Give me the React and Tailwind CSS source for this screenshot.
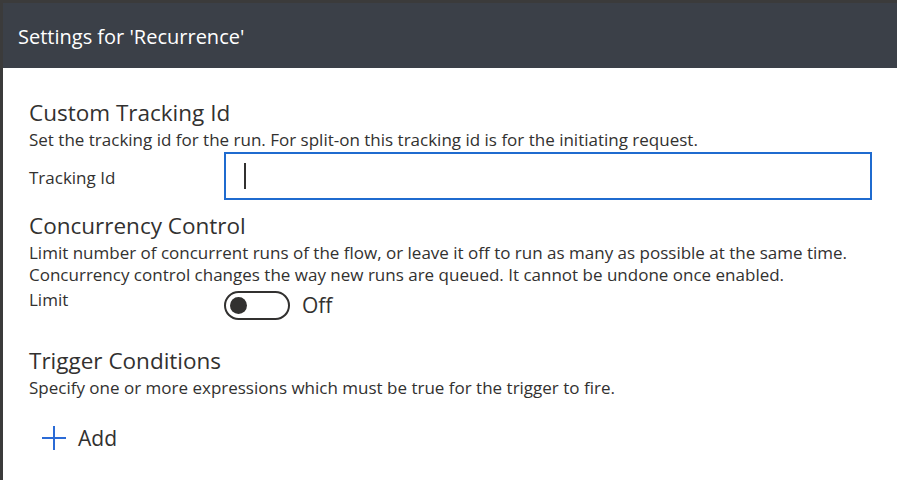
export default function App() {
  const font = { fontFamily: '"Open Sans", "Noto Sans", sans-serif' };
  return (
    <div className="w-[897px] h-[480px] bg-[#3b3b3b] pl-[3px] pt-[3px] overflow-hidden" style={font}>
      <div className="bg-[#3b4048] h-[65px] flex items-center pl-[15px]">
        <span className="text-white text-[20px] leading-[28px] mt-[2px]">Settings for 'Recurrence'</span>
      </div>
      <div className="bg-white h-[412px] pl-[26px] pr-[25px] pt-[30px] text-[#323130]">
        <div className="text-[22.5px] leading-[30px]">Custom Tracking Id</div>
        <div className="text-[17px] leading-[22px] mt-[1px]">Set the tracking id for the run. For split-on this tracking id is for the initiating request.</div>
        <div className="flex items-center mt-[1px]">
          <div className="w-[195px] text-[17px] mt-[4px]">Tracking Id</div>
          <div className="flex-1 h-[48px] border-2 border-[#1f6bcf] flex items-center pl-[18px]">
            <div className="w-[2px] h-[26px] bg-[#323130]"></div>
          </div>
        </div>
        <div className="text-[22.5px] leading-[30px] mt-[11px]">Concurrency Control</div>
        <div className="text-[17px] leading-[22px] mt-[1px]">Limit number of concurrent runs of the flow, or leave it off to run as many as possible at the same time.</div>
        <div className="text-[17px] leading-[22px]">Concurrency control changes the way new runs are queued. It cannot be undone once enabled.</div>
        <div className="flex items-start mt-[2px]">
          <div className="w-[195px] text-[17px] leading-[22px] mt-[1px]">Limit</div>
          <div className="flex items-center mt-[2px]">
            <div className="w-[66px] h-[29px] rounded-full border-2 border-[#323130] flex items-center pl-[4px]">
              <div className="w-[17px] h-[17px] rounded-full bg-[#323130]"></div>
            </div>
            <span className="ml-[12px] text-[21px] leading-[29px] mt-[1px]">Off</span>
          </div>
        </div>
        <div className="text-[22.5px] leading-[30px] mt-[26px]">Trigger Conditions</div>
        <div className="text-[17px] leading-[22px] mt-[1px]">Specify one or more expressions which must be true for the trigger to fire.</div>
        <div className="flex items-center mt-[23px] ml-[13px]">
          <svg width="24" height="24" viewBox="0 0 24 24">
            <path d="M12 0V24M0 12H24" stroke="#2b6bd6" strokeWidth="2" />
          </svg>
          <span className="ml-[12px] text-[21px] leading-[30px] mt-[1px]">Add</span>
        </div>
      </div>
    </div>
  );
}
